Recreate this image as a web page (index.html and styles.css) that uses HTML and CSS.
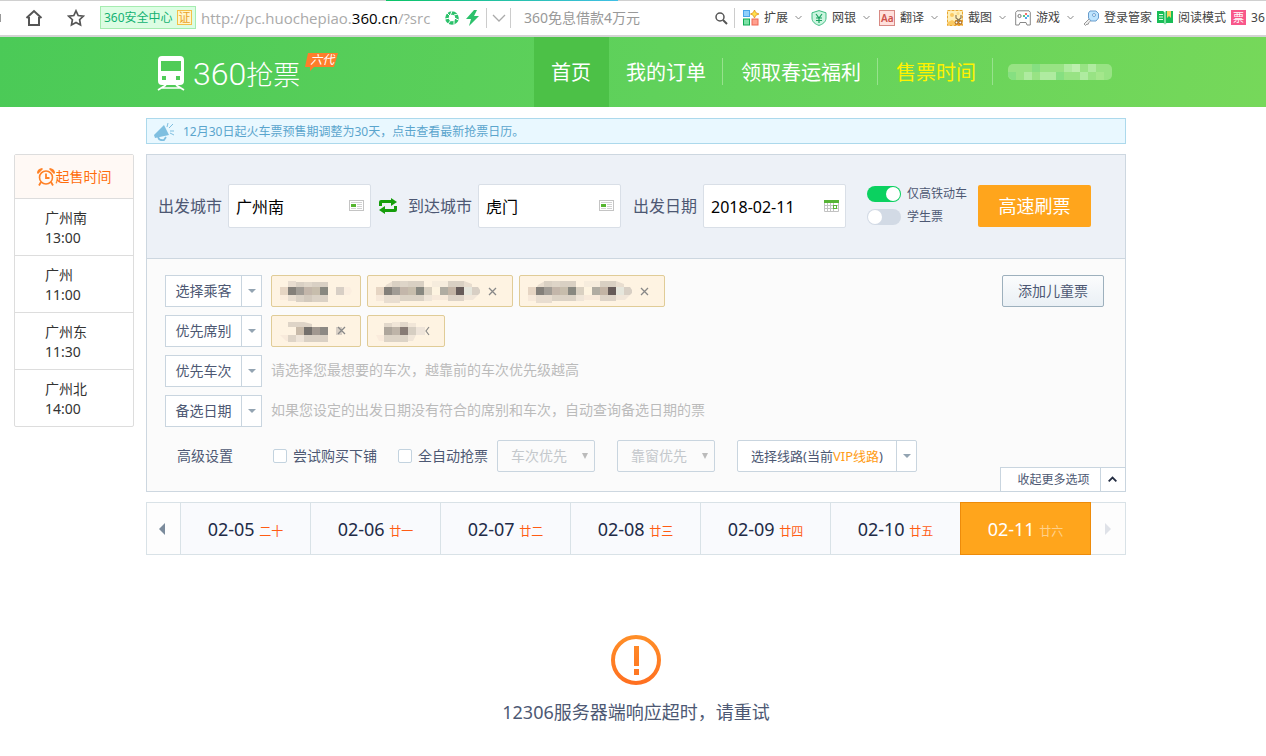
FILE: index.html
```html
<!DOCTYPE html>
<html lang="zh-CN">
<head>
<meta charset="utf-8">
<title>360抢票</title>
<link rel="stylesheet" href="styles.css">
</head>
<body>
<svg class="defs" width="0" height="0" aria-hidden="true">
  <defs>
    <symbol id="chev" viewBox="0 0 7 7"><path d="M0.5 2l3 3 3-3" fill="none" stroke="#888"/></symbol>
    <symbol id="card" viewBox="0 0 15 11"><rect x=".5" y=".5" width="14" height="10" fill="#fff" stroke="#c4c4c4"/><path d="M2 4h5v3H2z" fill="#55b530"/><path d="M2 2.5h11M8 4.5h5M8 6.5h5M2 8.5h5M8 8.5h5" stroke="#d2d2d2"/></symbol>
    <symbol id="mosaic-long" viewBox="0 0 104 22">
      <path d="M10 4l7-4h18v6H9zM72 3l8-3h8l8 3v3H72z" fill="#e8ddcf"/>
      <path d="M16 0h8v6h-8zM32 0h16v6H32zM72 0h16v6H72z" fill="#d9d0c3"/>
      <path d="M24 0h8v6h-8z" fill="#ded5c8"/><path d="M56 0h16v6H56z" fill="#f6ecdd"/>
      <path d="M0 6h8v8H0z" fill="#e6d5c3"/><path d="M8 6h8v8H8z" fill="#84807a"/><path d="M16 6h8v8h-8z" fill="#a19c95"/><path d="M24 6h8v8h-8z" fill="#c3b6aa"/><path d="M32 6h8v8h-8z" fill="#c7bdac"/><path d="M40 6h8v8h-8z" fill="#888880"/><path d="M48 6h8v8h-8z" fill="#d9d0c1"/><path d="M56 6h8v8h-8z" fill="#fdf3e0"/><path d="M64 6h8v8h-8z" fill="#b0aca2"/><path d="M72 6h8v8h-8z" fill="#c3b4a5"/><path d="M80 6h8v8h-8z" fill="#665b59"/><path d="M88 6h8v8h-8z" fill="#e6e6dc"/><path d="M96 6h6l2 3v3l-2 2h-6z" fill="#d8cfc4"/>
      <path d="M0 14h8v6H0zM56 14h16v5H56z" fill="#f7e9da"/><path d="M8 14h16v8H8z" fill="#e8ddd0"/><path d="M24 14h24v6H24z" fill="#dbd2c5"/><path d="M48 14h8v6h-8z" fill="#efe5d8"/><path d="M72 14h16v6H72z" fill="#ddd3c7"/><path d="M88 14h14l-5 5h-9z" fill="#f1e6d9"/>
    </symbol>
    <symbol id="mosaic-short" viewBox="0 0 74 22">
      <path d="M8 0h8v6H8z" fill="#e8ddd0"/><path d="M16 1h32v5H16z" fill="#d9d0c4"/><path d="M24 1h8v5h-8z" fill="#e0d7ca"/>
      <path d="M0 6h8v8H0z" fill="#e6d5c3"/><path d="M8 6h8v8H8z" fill="#84807a"/><path d="M16 6h8v8h-8z" fill="#a19c95"/><path d="M24 6h8v8h-8z" fill="#c3b6aa"/><path d="M32 6h8v8h-8z" fill="#c7bdac"/><path d="M40 6h8v8h-8z" fill="#888880"/><path d="M56 6h8v8h-8z" fill="#d8cfc5"/><path d="M64 6h6l2 4-2 4h-6z" fill="#fbeedf"/>
      <path d="M0 14h8v5H0z" fill="#fbecdc"/><path d="M8 14h8v6H8z" fill="#e8ddd0"/><path d="M16 14h32v7H16z" fill="#dad1c5"/><path d="M24 14h8v7h-8z" fill="#d2c9bd"/>
    </symbol>
  </defs>
</svg>

<div class="browser">
  <div class="progress"></div>
  <span class="edge"></span>
  <button class="ico home" aria-label="主页"><svg width="18" height="18" viewBox="0 0 18 18"><path d="M1.5 9L9 2l7.500 7M4 8v8h10V8" fill="none" stroke="#555" stroke-width="2"/></svg></button>
  <button class="ico star" aria-label="收藏"><svg width="18" height="18" viewBox="0 0 18 18"><path d="M9 1.800l2.200 4.700 5.100.7-3.700 3.500.9 5.200L9 13.400l-4.500 2.500.9-5.200L1.700 7.200l5.100-.7z" fill="none" stroke="#555" stroke-width="1.700"/></svg></button>
  <span class="safe">360安全中心<b>证</b></span>
  <span class="url">http://pc.huochepiao.<em>360.cn</em>/?src</span>
  <svg class="speed" width="14" height="14" viewBox="0 0 14 14"><circle cx="7" cy="7" r="5" fill="none" stroke="#2cc16b" stroke-width="3.600"/><path d="M7 0L5 5M13 3L9 4M13.500 9L9.500 7M9 13.500L9 9M3 13l3-4M0 8l5-1M2 2l3 3" stroke="#fff"/></svg>
  <svg width="13" height="16" viewBox="0 0 13 16"><path d="M8 0L0 9h5L3 16 13 6H8l3-6z" fill="#2cc16b"/></svg>
  <span class="url-more"><svg width="14" height="8" viewBox="0 0 14 8"><path d="M1 1l6 6 6-6" fill="none" stroke="#aaa" stroke-width="1.300"/></svg></span>
  <input class="search" type="text" aria-label="搜索" placeholder="360免息借款4万元">
  <button class="ico find" aria-label="搜索"><svg width="14" height="14" viewBox="0 0 14 14"><circle cx="6" cy="6" r="4" fill="none" stroke="#555" stroke-width="1.500"/><path d="M9 9l4 4" stroke="#555" stroke-width="2"/></svg></button>
  <div class="tools">
    <button><svg width="16" height="16" viewBox="0 0 16 16"><rect x=".5" y=".5" width="6" height="6" fill="#8fd0fb" stroke="#49a5ea"/><path d="M11.500 0l1.300 2.700L16 4l-3.200 1.300L11.500 8l-1.300-2.700L7.500 4l2.700-1.300z" fill="#ffe04a" stroke="#e39316" stroke-width=".8"/><rect x=".5" y="9" width="6" height="6" fill="#7ee2a6" stroke="#10ab55"/><rect x="9" y="9" width="6" height="6" fill="#ffa08f" stroke="#ef6652"/></svg>扩展<svg class="c"><use href="#chev"/></svg></button>
    <button><svg width="16" height="16" viewBox="0 0 16 16"><path d="M8 .6l7 2.200v5.200c0 4-3.400 6.300-7 7.400-3.600-1.100-7-3.400-7-7.400V2.800z" fill="#cbf5df" stroke="#3ebd82"/><path d="M5 4l3 4 3-4M8 8v5M5 8h6M5 10.500h6" fill="none" stroke="#19a15f" stroke-width="1.200"/></svg>网银<svg class="c"><use href="#chev"/></svg></button>
    <button><svg width="16" height="16" viewBox="0 0 16 16"><rect x=".5" y=".5" width="15" height="15" fill="#ffe0dc" stroke="#d88a84"/><text x="2" y="12" font-size="10" font-weight="600" fill="#cd514a">Aa</text></svg>翻译<svg class="c"><use href="#chev"/></svg></button>
    <button><svg width="16" height="16" viewBox="0 0 16 16"><rect x=".5" y=".5" width="15" height="15" fill="#fff0b8" stroke="#e9a72f" stroke-dasharray="3 1"/><circle cx="5" cy="5" r="2" fill="#fbca62"/><circle cx="11" cy="3.500" r="1.500" fill="#fbdc8a"/><path d="M1 15v-3l4-2 4 2v3z" fill="#fbca62"/><path d="M8 10h7v5H8z" fill="#e8952b"/><path d="M9 5v3l4 3M14 5v3l-4 3" fill="none" stroke="#8d7b59" stroke-width="1.200"/><circle cx="9.500" cy="12.500" r="1.400" fill="#fff" stroke="#9b621b"/><circle cx="13.300" cy="12.500" r="1.400" fill="#fff" stroke="#9b621b"/></svg>截图<svg class="c"><use href="#chev"/></svg></button>
    <button><svg width="16" height="16" viewBox="0 0 16 16"><path d="M2 .8h12l1.300 1.500V15H12l-1-2.500H5L4 15H.7V2.300z" fill="#fff" stroke="#888"/><circle cx="4.500" cy="6" r="1.600" fill="none" stroke="#777"/><circle cx="11" cy="4" r="1.100" fill="#f44f45"/><circle cx="13" cy="6" r="1.100" fill="#20aee1"/><circle cx="9" cy="6" r="1.100" fill="#29b66a"/><circle cx="11" cy="8" r="1.100" fill="#2a8be8"/></svg>游戏<svg class="c"><use href="#chev"/></svg></button>
    <button class="plain"><svg width="16" height="16" viewBox="0 0 16 16"><path d="M6 9l-5 5 1.500 1.500L4 14l1 .5 1-2 2-2" fill="#eee" stroke="#999"/><path d="M7 1h6l2.500 2.500V8L13 11H8L5.500 8V3z" fill="#bee5ff" stroke="#6a9dcc"/><circle cx="11" cy="5" r="1.500" fill="#fff" stroke="#70a3d0"/></svg>登录管家</button>
    <button class="plain"><svg width="16" height="16" viewBox="0 0 16 16"><path d="M0 1h6l2 1.500L9 1h7v12H9.500L8 14.500 6.500 13H0z" fill="#19bd57"/><path d="M8 2v12M2 4.500h4M2 7h4M2 9.500h4" stroke="#e4ffe9"/><path d="M10 1h4v7l-2-2-2 2z" fill="#f5d35f"/></svg>阅读模式</button>
    <button class="plain"><span class="ticket">票</span>36</button>
  </div>
</div>

<header class="site">
  <a class="logo" href="#">
    <svg width="28" height="36" viewBox="0 0 28 36"><path fill-rule="evenodd" d="M5 0h18q4 0 4 4v21q0 4-4 4H5q-4 0-4-4V4q0-4 4-4zM4 5v10h20V5zM5 20v4h4v-4zM19 20v4h4v-4z" fill="#fff"/><path d="M9 29L1 34M19 29l8 5M5 32h18" stroke="#fff" stroke-width="1.700"/></svg>
    <span class="word"><i>360</i>抢票</span>
    <span class="gen"><svg width="34" height="20" viewBox="0 0 34 20"><path d="M4 1h30l-4 14H10l-4 4v-4H1z" fill="#ff7d2b"/></svg><b>六代</b></span>
  </a>
  <nav>
    <a class="on" href="#">首页</a><a href="#">我的订单</a><a href="#">领取春运福利</a><a class="hot" href="#">售票时间</a>
    <svg class="user" width="104" height="16" viewBox="0 0 104 16"><rect width="104" height="16" rx="5" fill="#98e384"/><path d="M0 8h8v8H4l-4-4zM24 0h8v8h-8zM48 8h8v8h-8z" fill="#86df81"/><path d="M16 8h8v8h-8zM32 8h16v8H32zM56 0h8v8h-8zM72 8h8v8h-8zM80 0h8v8h-8z" fill="#afeba0"/><path d="M64 0h8v8h-8z" fill="#bdefae"/><path d="M88 8h8v8h-8z" fill="#a4e78c"/></svg>
  </nav>
</header>

<div class="page">
  <aside>
    <h2><svg width="18" height="18" viewBox="0 0 18 18"><circle cx="9" cy="9.500" r="6.500" fill="none" stroke="#ff8126" stroke-width="1.600"/><path d="M0 5q0-4 5-5l1 1-5 5zM18 5q0-4-5-5l-1 1 5 5z" fill="#ff8126"/><path d="M9 5.500v4.500h3.500M4 14l-2 3.500M14 14l2 3.500" fill="none" stroke="#ff8126" stroke-width="1.800"/></svg>起售时间</h2>
    <ul>
      <li>广州南<br>13:00</li>
      <li>广州<br>11:00</li>
      <li>广州东<br>11:30</li>
      <li>广州北<br>14:00</li>
    </ul>
  </aside>

  <main>
    <a class="notice" href="#"><svg width="22" height="18" viewBox="0 0 22 18"><path d="M1 12L11 2l5 10-14 3z" fill="#7fbfe0"/><path d="M5 14q1 4 6 3l2-3" fill="none" stroke="#7fbfe0" stroke-width="1.800"/><path d="M14 4l1-4M16 5l4-4M17 8h4M17 10l4 2" stroke="#7fbfe0"/></svg>12月30日起火车票预售期调整为30天，点击查看最新抢票日历。</a>

    <section class="panel">
      <form class="query">
        <label for="from">出发城市</label>
        <span class="field"><input id="from" type="text" value="广州南"><svg width="15" height="11"><use href="#card"/></svg></span>
        <button class="swap" type="button" aria-label="交换"><svg width="18" height="16" viewBox="0 0 18 16"><path d="M0 8V4q0-2 2-2h10V0l6 4-6 4V5H3v3zM18 8v4q0 2-2 2H6v2l-6-4 6-4v3h9V8z" fill="#159d0b"/></svg></button>
        <label for="to">到达城市</label>
        <span class="field"><input id="to" type="text" value="虎门"><svg width="15" height="11"><use href="#card"/></svg></span>
        <label class="day" for="day">出发日期</label>
        <span class="field"><input id="day" type="text" value="2018-02-11"><svg width="15" height="12" viewBox="0 0 15 12"><path d="M0 0h15v3H0z" fill="#57b437"/><path d="M.5 3v8.500h14V3M.5 5.500h14M.5 8.500h14M3.500 3v9M6.500 3v9M9.500 3v9" fill="none" stroke="#c2c2c2"/><rect x="9.500" y="5.500" width="3" height="3" fill="#fff" stroke="#57b437"/></svg></span>
        <span class="toggles">
          <label><input type="checkbox" checked>仅高铁动车</label>
          <label><input type="checkbox">学生票</label>
        </span>
        <button class="go" type="button">高速刷票</button>
      </form>

      <div class="options">
        <div class="row">
          <button class="split"><span>选择乘客</span><i></i></button>
          <span class="chip"><svg width="74" height="22"><use href="#mosaic-short"/></svg></span>
          <span class="chip"><svg width="104" height="22"><use href="#mosaic-long"/></svg><button aria-label="删除"><svg width="9" height="9" viewBox="0 0 9 9"><path d="M1 1l7 7M8 1L1 8" stroke="#888" stroke-width="1.300"/></svg></button></span>
          <span class="chip"><svg width="104" height="22"><use href="#mosaic-long"/></svg><button aria-label="删除"><svg width="9" height="9" viewBox="0 0 9 9"><path d="M1 1l7 7M8 1L1 8" stroke="#888" stroke-width="1.300"/></svg></button></span>
          <button class="child">添加儿童票</button>
        </div>
        <div class="row">
          <button class="split"><span>优先席别</span><i></i></button>
          <span class="chip"><svg width="74" height="22" viewBox="0 0 74 22"><path d="M8 1h16l8 2v3H8z" fill="#ded4c7"/><path d="M16 6h8v8h-8z" fill="#c8baa9"/><path d="M24 6h8v8h-8z" fill="#74706c"/><path d="M32 6h8v8h-8z" fill="#a19890"/><path d="M40 6h8v8h-8z" fill="#8c8984"/><path d="M56 6h6v8h-6z" fill="#d8cfc5"/><path d="M0 14h8v6H6z" fill="#f8eadb"/><path d="M8 14h8v7H8z" fill="#ded4c7"/><path d="M16 14h8v7h-8z" fill="#eee4d8"/><path d="M24 14h24v7H24z" fill="#d9d0c4"/><path d="M58 6l7 7M65 6l-7 7" stroke="#888" stroke-width="1.300"/></svg></span>
          <span class="chip"><svg width="62" height="22" viewBox="0 0 62 22"><path d="M8 2h8v4H8zM24 1h8v5h-8z" fill="#e2d8cb"/><path d="M16 1h8v5h-8zM32 2h8v4h-8z" fill="#f1e6d8"/><path d="M8 6h8v8H8z" fill="#aea69c"/><path d="M16 6h8v8h-8z" fill="#beb4a8"/><path d="M24 6h8v8h-8z" fill="#877b75"/><path d="M32 6h8v8h-8z" fill="#d6cec2"/><path d="M40 6h9v8h-9z" fill="#eee4d9"/><path d="M0 14h8v6H3z" fill="#faebdc"/><path d="M8 14h24v7H8z" fill="#dcd3c6"/><path d="M32 14h8l-3 6h-5z" fill="#f0e5d8"/><path d="M53 6l-3 4 3 4" fill="none" stroke="#888" stroke-width="1.200"/></svg></span>
        </div>
        <div class="row">
          <button class="split"><span>优先车次</span><i></i></button>
          <span class="hint">请选择您最想要的车次，越靠前的车次优先级越高</span>
        </div>
        <div class="row">
          <button class="split"><span>备选日期</span><i></i></button>
          <span class="hint">如果您设定的出发日期没有符合的席别和车次，自动查询备选日期的票</span>
        </div>
        <div class="row more">
          <span class="title">高级设置</span>
          <label><input type="checkbox">尝试购买下铺</label>
          <label><input type="checkbox">全自动抢票</label>
          <span class="sel"><select disabled aria-label="车次优先"><option>车次优先</option></select></span>
          <span class="sel"><select disabled aria-label="靠窗优先"><option>靠窗优先</option></select></span>
          <button class="split line"><span>选择线路(当前<em>VIP线路</em>)</span><i></i></button>
        </div>
      </div>
      <button class="fold"><span>收起更多选项</span><svg width="25" height="24" viewBox="0 0 25 24"><path d="M8 14l4-4 4 4" fill="none" stroke="#222b40" stroke-width="1.800"/></svg></button>
    </section>

    <div class="dates">
      <button class="arrow prev" aria-label="前一天"><svg width="6" height="12" viewBox="0 0 6 12"><path d="M6 0v12L0 6z" fill="#7b8b9c"/></svg></button>
      <button>02-05 <small>二十</small></button>
      <button>02-06 <small>廿一</small></button>
      <button>02-07 <small>廿二</small></button>
      <button>02-08 <small>廿三</small></button>
      <button>02-09 <small>廿四</small></button>
      <button>02-10 <small>廿五</small></button>
      <button class="on">02-11 <small>廿六</small></button>
      <button class="arrow next" aria-label="后一天"><svg width="6" height="12" viewBox="0 0 6 12"><path d="M0 0v12l6-6z" fill="#dfe2e8"/></svg></button>
    </div>

    <div class="error">
      <svg width="50" height="50" viewBox="0 0 50 50"><defs><linearGradient id="og" x1="0" y1="0" x2="0" y2="50" gradientUnits="userSpaceOnUse"><stop stop-color="#ff8f28"/><stop offset="1" stop-color="#ff6f20"/></linearGradient></defs><circle cx="25" cy="25" r="23" fill="none" stroke="url(#og)" stroke-width="4"/><path d="M23 11h5v20h-5zM23 34h5v6h-5z" fill="url(#og)"/></svg>
      <p>12306服务器端响应超时，请重试</p>
    </div>
  </main>
</div>
</body>
</html>
```
FILE: styles.css
```css
* { box-sizing: border-box; }
body {
  margin: 0;
  background: #fff;
  color: #333;
  font: 14px/20px "Noto Sans", "Noto Sans CJK SC", sans-serif;
  overflow: hidden;
}
button {
  padding: 0;
  border: 0;
  background: none;
  color: inherit;
  font: inherit;
  white-space: nowrap;
  cursor: pointer;
}
input, select { font: inherit; margin: 0; }
a { text-decoration: none; }
svg { display: block; flex: none; }
i, em { font-style: normal; }
.defs { position: absolute; }

/* browser bar */
.browser {
  position: relative;
  display: flex;
  align-items: center;
  height: 37px;
  border-bottom: 2px solid #d4d4d4;
  box-shadow: inset 0 1px #d0d0d0;
  overflow: hidden;
  white-space: nowrap;
}
.browser > * { flex: none; }
.progress {
  position: absolute;
  top: 0;
  left: 386px;
  width: 232px;
  height: 1px;
  background: linear-gradient(90deg, #0ac465, #3fbfe6);
}
.edge { width: 1px; height: 8px; background: #999; }
.home { margin-left: 24px; }
.star { margin-left: 24px; }
.safe {
  display: flex;
  align-items: center;
  justify-content: space-between;
  width: 96px;
  height: 23px;
  margin-left: 15px;
  padding: 0 3px;
  border: 1px solid #a5ecb0;
  background: #dcfde3;
  color: #12b272;
  font-size: 12px;
}
.safe b {
  width: 15px;
  height: 15px;
  border: 1px solid #f4c048;
  background: #fff6cb;
  color: #eba32a;
  font-size: 12px;
  font-weight: 400;
  line-height: 13px;
  text-align: center;
}
.url {
  width: 243px;
  margin-left: 5px;
  overflow: hidden;
  color: #aaa;
  font-family: "Open Sans", "Noto Sans", sans-serif;
  font-size: 15px;
}
.url em { color: #000; }
.speed { margin: 0 7px 0 1px; }
.url-more {
  display: flex;
  align-items: center;
  justify-content: center;
  width: 25px;
  height: 20px;
  margin-left: 7px;
  border: solid #ccc;
  border-width: 0 1px;
}
.search {
  width: 190px;
  margin-left: 13px;
  padding: 0;
  border: 0;
  outline: 0;
  background: none;
  font-size: 14px;
}
.search::placeholder { color: #999; opacity: 1; }
.tools {
  display: flex;
  align-items: center;
  gap: 9px;
  height: 20px;
  margin-left: 6px;
  padding-left: 8px;
  border-left: 1px solid #ccc;
  color: #444;
  font-size: 12px;
}
.tools button { display: flex; align-items: center; gap: 5px; }
.tools .c { width: 7px; height: 7px; margin-left: 2px; }
.tools .plain { margin-right: -4px; }
.ticket {
  width: 15px;
  height: 15px;
  background: #f8578a;
  color: #fff;
  font-size: 11px;
  line-height: 15px;
}

/* green header */
.site {
  display: flex;
  height: 70px;
  padding: 0 154px 0 157px;
  background: linear-gradient(100deg, #4bca57, #60d15b 52%, #76d85a);
}
.logo {
  display: flex;
  align-items: center;
  width: 377px;
  padding-top: 4px;
  color: #fff;
}
.word {
  margin-left: 8px;
  font: 300 27px/36px "Noto Sans CJK SC", sans-serif;
}
.word i { font-family: Roboto, sans-serif; font-size: 32px; font-weight: 300; }
.gen {
  position: relative;
  align-self: flex-start;
  margin: 11px 0 0 4px;
}
.gen b {
  position: absolute;
  top: 0;
  left: 6px;
  font-size: 12px;
  font-weight: 400;
  font-style: italic;
  line-height: 16px;
  white-space: nowrap;
}
nav { display: flex; align-items: center; }
nav a {
  position: relative;
  padding: 2px 18px 0 17px;
  color: #fff;
  font-size: 20px;
  line-height: 68px;
  white-space: nowrap;
}
nav a:not(.on)::after {
  content: "";
  position: absolute;
  top: 21px;
  right: 1px;
  width: 1px;
  height: 27px;
  background: #97e28d;
}
nav .on { background: #4cc147; }
nav .hot { color: #fff200; }
.user { margin-left: 14px; }

/* page */
.page {
  display: grid;
  grid-template-columns: 120px 1fr;
  gap: 12px;
  align-items: start;
  padding: 11px 140px 0 14px;
}
aside {
  margin-top: 36px;
  border: 1px solid #ddd;
  border-radius: 2px;
}
aside h2 {
  display: flex;
  align-items: center;
  justify-content: center;
  gap: 1px;
  height: 43px;
  margin: 0;
  background: #fff9f5;
  color: #ff6d0c;
  font-size: 14px;
  font-weight: 400;
}
aside ul { margin: 0; padding: 0; list-style: none; }
aside li {
  padding: 9px 0 7px 30px;
  border-top: 1px solid #ddd;
}
.notice {
  display: flex;
  align-items: center;
  gap: 8px;
  height: 26px;
  padding: 1px 0 0 6px;
  border: 1px solid #acd9ec;
  background: #e9f8ff;
  color: #5aa5cd;
  font-size: 12px;
}
.panel {
  position: relative;
  margin-top: 10px;
  border: 1px solid #cdd7e0;
  background: #fbfbfb;
}
.query {
  display: flex;
  align-items: center;
  height: 104px;
  padding: 0 0 2px 11px;
  border-bottom: 1px solid #cdd7e0;
  background: #edf1f7;
  color: #4d5873;
}
.query > label { font-size: 16px; white-space: nowrap; }
.field {
  display: flex;
  align-items: center;
  width: 143px;
  height: 44px;
  margin-left: 6px;
  padding: 0 6px 0 7px;
  border: 1px solid #d9dfe7;
  border-radius: 2px;
  background: #fff;
}
.field input {
  flex: 1;
  min-width: 0;
  padding: 2px 0 0;
  border: 0;
  outline: 0;
  font-size: 16px;
}
.swap { margin: 0 11px 0 8px; }
.query .day { margin-left: 12px; }
.toggles {
  display: grid;
  gap: 3px;
  margin-left: 21px;
  font-size: 12px;
}
.toggles label {
  display: flex;
  align-items: center;
  gap: 6px;
  white-space: nowrap;
}
.toggles input {
  display: flex;
  width: 34px;
  height: 16px;
  padding: 1px;
  border-radius: 8px;
  background: #d2dae5;
  appearance: none;
}
.toggles input::before {
  content: "";
  width: 14px;
  height: 14px;
  border-radius: 50%;
  background: #fff;
}
.toggles input:checked { justify-content: flex-end; background: #0bd160; }
.go {
  width: 113px;
  height: 42px;
  margin-left: 11px;
  border-radius: 2px;
  background: #ffa51c;
  color: #fff;
  font-size: 18px;
}

.options {
  display: grid;
  gap: 8px;
  padding: 16px 21px 19px 18px;
  color: #4d5873;
}
.row { display: flex; align-items: center; height: 32px; gap: 6px; }
.split {
  display: flex;
  width: 97px;
  height: 32px;
  margin-right: 3px;
  border: 1px solid #c9d5df;
  background: #fff;
  line-height: 30px;
}
.split span { flex: 1; }
.split i {
  display: flex;
  align-items: center;
  justify-content: center;
  width: 20px;
  height: 30px;
  border-left: 1px solid #c9d5df;
}
.split i::before {
  content: "";
  border: 4px solid transparent;
  border-top-color: #93a4b2;
  border-bottom: 0;
}
.chip {
  display: flex;
  align-items: center;
  height: 32px;
  padding: 2px 6px 0 8px;
  border: 1px solid #e0cc97;
  border-radius: 2px;
  background: #fef3e2;
}
.chip button { margin: 0 8px 2px; }
.child {
  width: 102px;
  height: 32px;
  margin-left: auto;
  border: 1px solid #9db0bd;
  border-radius: 2px;
  background: linear-gradient(#fbfcfd, #eaf0f5);
}
.chip:has(button) { padding-right: 7px; }
.hint { padding-bottom: 2px; color: #bbb; line-height: 30px; white-space: nowrap; }
.more { margin-top: 5px; padding-left: 12px; gap: 0; }
.title { width: 96px; }
.more label {
  display: flex;
  align-items: center;
  gap: 6px;
  margin-right: 21px;
  white-space: nowrap;
}
.more label + label { margin-right: 9px; }
.more input {
  width: 14px;
  height: 14px;
  border: 1px solid #c3d3df;
  border-radius: 2px;
  background: #fff;
  appearance: none;
}
.sel { position: relative; margin-right: 22px; }
.sel + .split { margin: 0; }
.sel select {
  display: block;
  width: 98px;
  height: 32px;
  padding: 0 13px;
  border: 1px solid #c9d5df;
  border-radius: 2px;
  background: #fbfbfb;
  color: #c4c8cc;
  opacity: 1;
  appearance: none;
}
.sel::after {
  content: "";
  position: absolute;
  top: 13px;
  right: 7px;
  border: 3px solid transparent;
  border-top: 6px solid #bbb;
  border-bottom: 0;
}
.split.line { width: 180px; border-radius: 2px; font-size: 13px; }
.line em { color: #ff9c15; }
.fold {
  position: absolute;
  right: -1px;
  bottom: -1px;
  display: flex;
  width: 126px;
  border: 1px solid #c9d5df;
  background: #fff;
  color: #4d5873;
  font-size: 12px;
  line-height: 23px;
}
.fold span { flex: 1; padding-left: 6px; }
.fold svg { height: 23px; border-left: 1px solid #c9d5df; }

.dates {
  display: flex;
  height: 53px;
  margin-top: 10px;
  border: 1px solid #d9e2e7;
  background: #f9fafd;
  color: #222b47;
}
.dates button {
  flex: 1;
  padding-top: 3px;
  border-right: 1px solid #d9e2e7;
  font-size: 18px;
}
.dates small { color: #ff5c14; font-size: 12px; }
.dates .arrow {
  display: flex;
  flex: 0 0 34px;
  align-items: center;
  justify-content: center;
  padding: 0;
  background: #fdfdfd;
}
.dates .prev { padding-right: 4px; }
.dates .next { border: 0; }
.dates .on {
  margin: -1px 0 -1px -1px;
  border: 1px solid #ed8b0a;
  background: #ffa51c;
  color: #fff;
}
.dates .on small { color: #ffd08a; }

.error {
  display: grid;
  justify-items: center;
  margin-top: 80px;
  color: #4d5873;
  font-size: 18px;
}
.error p { margin: 14px 0 0; line-height: 26px; }
```
